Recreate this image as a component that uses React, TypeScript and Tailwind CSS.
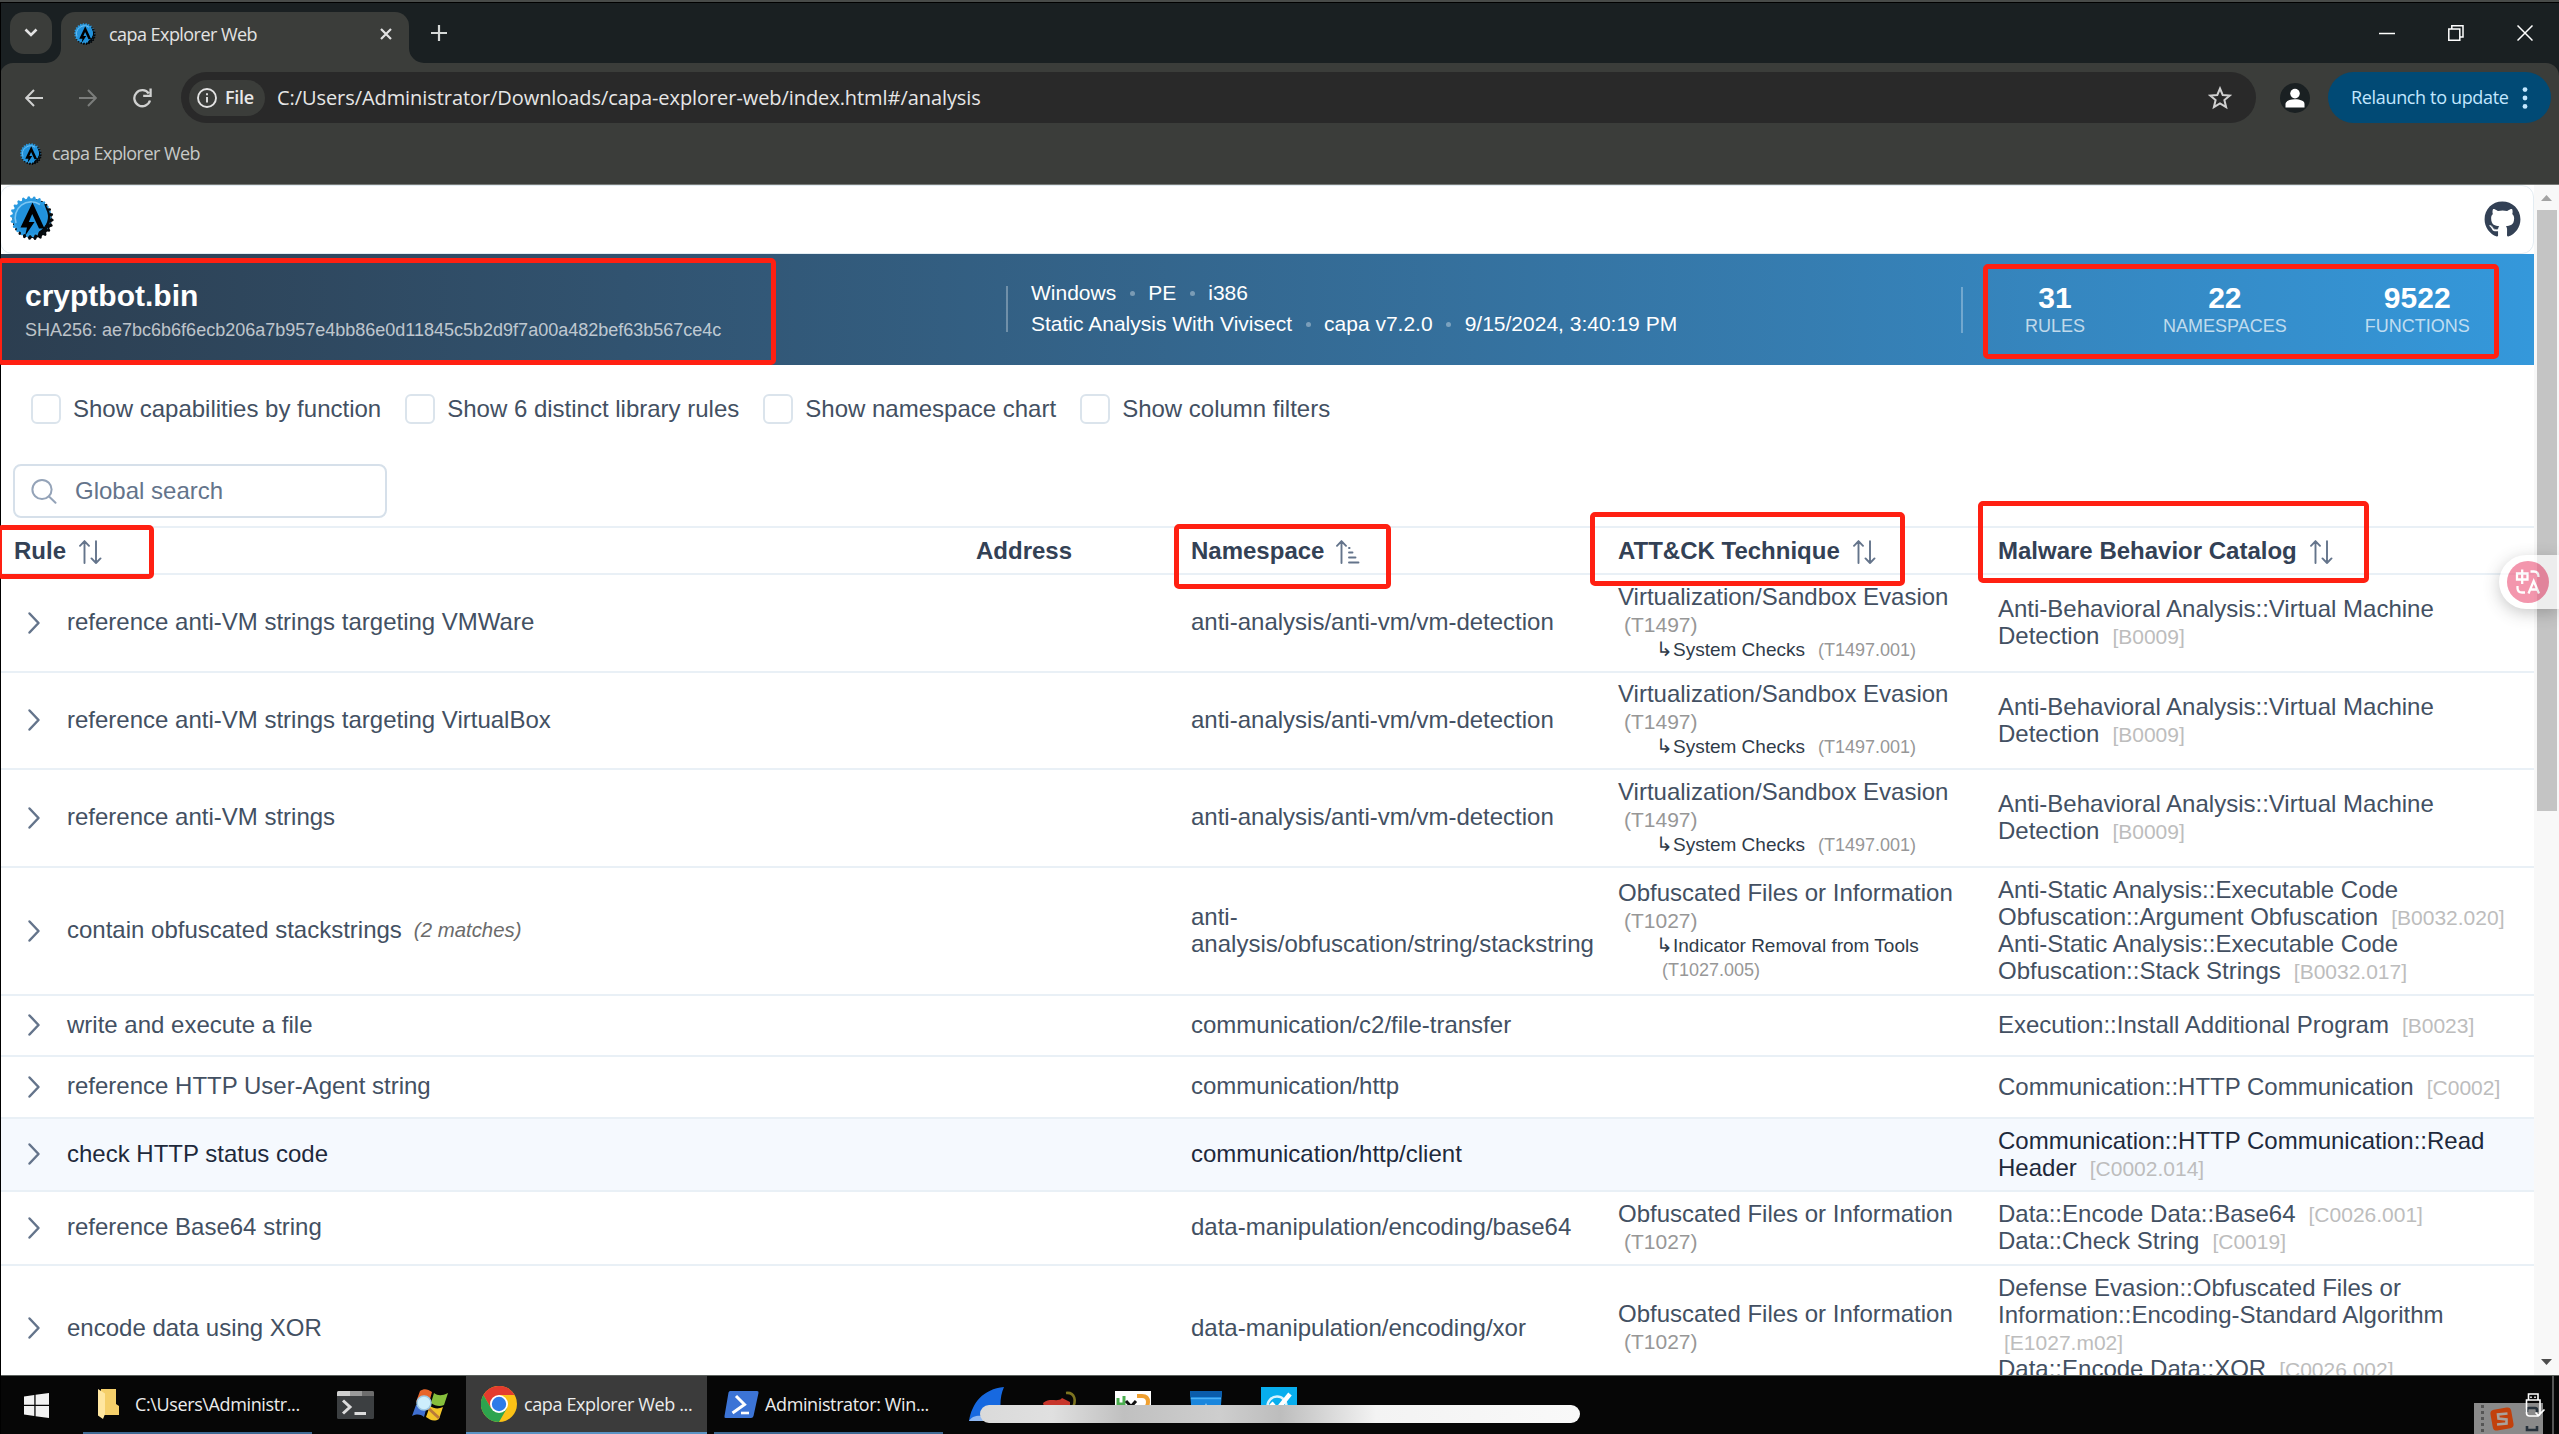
import type { ReactNode } from 'react';
import { clsx } from 'clsx';
import { FaGithub } from 'react-icons/fa';

type Technique = { name: string; id: string; sub?: { name: string; id: string; wrap?: boolean } };

type RuleRow = {
  rule: string;
  matches?: string;
  namespace: string[];
  attack?: Technique;
  mbc: { text?: string; id?: string }[];
  height: string;
  hovered?: boolean;
};

const vmDetection = {
  namespace: ['anti-analysis/anti-vm/vm-detection'],
  attack: {
    name: 'Virtualization/Sandbox Evasion',
    id: '(T1497)',
    sub: { name: 'System Checks', id: '(T1497.001)' },
  },
  mbc: [{ text: 'Anti-Behavioral Analysis::Virtual Machine' }, { text: 'Detection', id: '[B0009]' }],
};

const obfuscated = { name: 'Obfuscated Files or Information', id: '(T1027)' };

const rows: RuleRow[] = [
  { rule: 'reference anti-VM strings targeting VMWare', ...vmDetection, height: 'h-[98px]' },
  { rule: 'reference anti-VM strings targeting VirtualBox', ...vmDetection, height: 'h-[97px]' },
  { rule: 'reference anti-VM strings', ...vmDetection, height: 'h-[98px]' },
  {
    rule: 'contain obfuscated stackstrings',
    matches: '(2 matches)',
    namespace: ['anti-', 'analysis/obfuscation/string/stackstring'],
    attack: { ...obfuscated, sub: { name: 'Indicator Removal from Tools', id: '(T1027.005)', wrap: true } },
    mbc: [
      { text: 'Anti-Static Analysis::Executable Code' },
      { text: 'Obfuscation::Argument Obfuscation', id: '[B0032.020]' },
      { text: 'Anti-Static Analysis::Executable Code' },
      { text: 'Obfuscation::Stack Strings', id: '[B0032.017]' },
    ],
    height: 'h-[128px]',
  },
  {
    rule: 'write and execute a file',
    namespace: ['communication/c2/file-transfer'],
    mbc: [{ text: 'Execution::Install Additional Program', id: '[B0023]' }],
    height: 'h-[61px]',
  },
  {
    rule: 'reference HTTP User-Agent string',
    namespace: ['communication/http'],
    mbc: [{ text: 'Communication::HTTP Communication', id: '[C0002]' }],
    height: 'h-[62px]',
  },
  {
    rule: 'check HTTP status code',
    namespace: ['communication/http/client'],
    mbc: [{ text: 'Communication::HTTP Communication::Read' }, { text: 'Header', id: '[C0002.014]' }],
    height: 'h-[73px]',
    hovered: true,
  },
  {
    rule: 'reference Base64 string',
    namespace: ['data-manipulation/encoding/base64'],
    attack: obfuscated,
    mbc: [
      { text: 'Data::Encode Data::Base64', id: '[C0026.001]' },
      { text: 'Data::Check String', id: '[C0019]' },
    ],
    height: 'h-[74px]',
  },
  {
    rule: 'encode data using XOR',
    namespace: ['data-manipulation/encoding/xor'],
    attack: obfuscated,
    mbc: [
      { text: 'Defense Evasion::Obfuscated Files or' },
      { text: 'Information::Encoding-Standard Algorithm' },
      { id: '[E1027.m02]' },
      { text: 'Data::Encode Data::XOR', id: '[C0026.002]' },
    ],
    height: 'h-[127px]',
  },
];

const tableGrid = 'grid grid-cols-[962px_215px_427px_380px_1fr]';

const gearPath = (cx: number, cy: number, outer: number, inner: number, teeth: number) => {
  const points: string[] = [];
  for (let i = 0; i < teeth * 4; i++) {
    const r = i % 4 < 2 ? outer : inner;
    const a = (i / (teeth * 4)) * Math.PI * 2;
    points.push(`${(cx + r * Math.cos(a)).toFixed(2)} ${(cy + r * Math.sin(a)).toFixed(2)}`);
  }
  return `M${points.join('L')}Z`;
};

const CapaLogo = ({ className }: { className: string }) => (
  <svg viewBox="0 0 44 44" className={className}>
    <path d={gearPath(23, 23.4, 20.6, 18.6, 22)} fill="#05090c" />
    <path d={gearPath(20.8, 20.8, 20.6, 18.4, 22)} fill="#2a9ae0" />
    <path d="M34 7.5 A20 20 0 0 1 27 41 L29 35 A16 16 0 0 0 36 13Z" fill="#05090c" />
    <circle cx="20.8" cy="21.6" r="16.2" fill="#2192dc" />
    <path d="M6 27 A16 16 0 0 1 30 8.5" fill="none" stroke="#7cc6f3" strokeWidth="1.6" />
    <path d="M22.5 6.5 L34.5 32.5 L29 32.5 L22.2 18 L18.8 26 L24.5 26 L15 40 L17 31.5 L10.5 31.5Z" fill="#000" />
  </svg>
);

const SortIcon = () => (
  <svg viewBox="0 0 24 24" className="mt-0.5 size-6" fill="none" stroke="#64748b" strokeWidth="1.9" strokeLinecap="round" strokeLinejoin="round">
    <path d="M6.5 23V1.2M2 5.8L6.5 1.2L11 5.8M18 1.2V23M13.5 18.4L18 23L22.5 18.4" />
  </svg>
);

const SortAscIcon = () => (
  <svg viewBox="0 0 24 24" className="mt-0.5 size-6" fill="none" stroke="#64748b" strokeWidth="1.9" strokeLinecap="round" strokeLinejoin="round">
    <path d="M5.5 23V1.2M1 5.8L5.5 1.2L10 5.8M13 22.5H22.5M13 17.5H19.5M13 12.5H16.5M13 8H13.6" />
  </svg>
);

const ChevronRight = () => (
  <svg viewBox="0 0 24 24" className="mt-0.5 size-6 shrink-0" fill="none" stroke="#64748b" strokeWidth="2.5" strokeLinecap="round" strokeLinejoin="round">
    <path d="M7.5 2.5L16.5 12L7.5 21.5" />
  </svg>
);

const TitleBar = () => (
  <div className="flex h-[61px] shrink-0 items-start border-t border-black bg-[#1a2022]">
    <div className="ml-2.5 mt-[9px] flex size-[42px] items-center justify-center rounded-[14px] bg-[#3b3d3a]">
      <svg viewBox="0 0 14 10" className="h-2.5 w-3.5" fill="none" stroke="#e3e3e3" strokeWidth="2.6">
        <path d="M1.5 1.5L7 7L12.5 1.5" />
      </svg>
    </div>
    <svg viewBox="0 0 15 15" className="-ml-1.5 mt-[45px] size-[15px] shrink-0">
      <path d="M15 0V15H0A15 15 0 0 0 15 0Z" fill="#3b3d3a" />
    </svg>
    <div className="mt-[9px] flex h-[51px] w-[348px] items-center rounded-t-[14px] bg-[#3b3d3a] pb-2 pl-[13px] pr-[17px]">
      <CapaLogo className="size-[22px]" />
      <span className="ml-[13px] mt-0.5 text-[18px] tracking-[-0.55px] text-[#e3e3e3]">capa Explorer Web</span>
      <svg viewBox="0 0 12 12" className="ml-auto size-3" fill="none" stroke="#e3e3e3" strokeWidth="2.2">
        <path d="M1 1L11 11M11 1L1 11" />
      </svg>
    </div>
    <svg viewBox="0 0 15 15" className="mt-[45px] size-[15px] shrink-0">
      <path d="M0 0V15H15A15 15 0 0 1 0 0Z" fill="#3b3d3a" />
    </svg>
    <svg viewBox="0 0 16 16" className="ml-[7px] mt-[22px] size-4" stroke="#d5d8d7" strokeWidth="2.2">
      <path d="M8 0V16M0 8H16" />
    </svg>
    <div className="ml-auto mr-[26px] mt-[22px] flex items-center gap-[53px]">
      <svg viewBox="0 0 16 16" className="size-4" stroke="#fff" strokeWidth="1.5">
        <path d="M0 8.5H16" />
      </svg>
      <svg viewBox="0 0 16 16" className="size-4" fill="none" stroke="#fff" strokeWidth="1.5">
        <path d="M0.8 4H11.8V15.2H0.8ZM3.8 4V0.8H15V12H11.8" />
      </svg>
      <svg viewBox="0 0 16 16" className="size-4" stroke="#fff" strokeWidth="1.5">
        <path d="M0.5 0.5L15.5 15.5M15.5 0.5L0.5 15.5" />
      </svg>
    </div>
  </div>
);

const Toolbar = () => (
  <div className="bg-[#1a2022]">
    <div className="flex h-[122px] flex-col rounded-t-[13px] border-b border-[#777a77] bg-[#3b3d3a]">
      <div className="flex items-center pr-2 pt-[9px]">
        <svg viewBox="0 0 18 18" className="ml-[25px] size-[18px]" fill="none" stroke="#d0d1d0" strokeWidth="2">
          <path d="M18 9H1.5M9 1L1.2 9L9 17" />
        </svg>
        <svg viewBox="0 0 18 18" className="ml-9 size-[18px]" fill="none" stroke="#7b7d7b" strokeWidth="2">
          <path d="M0 9H16.5M9 1L16.8 9L9 17" />
        </svg>
        <svg viewBox="0 0 20 20" className="ml-[35px] size-5" fill="none" stroke="#d0d1d0" strokeWidth="2.3">
          <path d="M16.8 5.5A8 8 0 1 0 18 12.5M18.6 0.5V7.8H11.2" />
        </svg>
        <div className="ml-[29px] flex h-[51px] w-[2076px] items-center rounded-full bg-[#292929] pl-2 pr-6">
          <div className="flex h-9 w-[76px] items-center rounded-full bg-[#3b3d3a] pl-2">
            <svg viewBox="0 0 20 20" className="size-5" fill="none" stroke="#e3e3e3" strokeWidth="1.9">
              <circle cx="10" cy="10" r="9" />
              <path d="M10 9V14.5M10 5.2V7.2" />
            </svg>
            <span className="ml-2 text-[18px] font-semibold tracking-[-0.3px] text-[#e8e8e8]">File</span>
          </div>
          <span className="ml-3 text-[20px] tracking-[-0.07px] text-[#e6e6e6]">
            C:/Users/Administrator/Downloads/capa-explorer-web/index.html#/analysis
          </span>
          <svg viewBox="0 0 24 24" className="ml-auto size-6" fill="none" stroke="#d0d0d0" strokeWidth="2">
            <path d="M12 2.5L14.7 9L21.8 9.5L16.4 14.1L18.1 21.2L12 17.4L5.9 21.2L7.6 14.1L2.2 9.5L9.3 9Z" />
          </svg>
        </div>
        <div className="ml-6 flex size-[30px] items-center justify-center rounded-full bg-[#1a2022]">
          <svg viewBox="0 0 20 20" className="size-5" fill="#fff">
            <circle cx="10" cy="5.6" r="4.8" />
            <path d="M0.5 19.5V16C0.5 12.8 5 11.3 10 11.3S19.5 12.8 19.5 16V19.5Z" />
          </svg>
        </div>
        <div className="ml-[18px] flex h-[51px] w-[223px] items-center rounded-full bg-[#014a75] pl-[23px]">
          <span className="whitespace-nowrap text-[18px] tracking-[-0.35px] text-[#c2e7ff]">Relaunch to update</span>
          <svg viewBox="0 0 6 22" className="ml-auto mr-[23px] h-[22px] w-1.5" fill="#c2e7ff">
            <circle cx="3" cy="2.6" r="2.4" />
            <circle cx="3" cy="11" r="2.4" />
            <circle cx="3" cy="19.4" r="2.4" />
          </svg>
        </div>
      </div>
      <div className="flex items-center pl-5 pt-[17px]">
        <CapaLogo className="size-[22px]" />
        <span className="ml-2.5 text-[18px] tracking-[-0.55px] text-[#c7c9c7]">capa Explorer Web</span>
      </div>
    </div>
  </div>
);

const Dot = () => <span className="mt-0.5 size-[5px] rounded-full bg-white/35" />;

const stats = [
  { value: '31', label: 'RULES' },
  { value: '22', label: 'NAMESPACES' },
  { value: '9522', label: 'FUNCTIONS' },
];

const Banner = () => (
  <div className="flex h-[111px] shrink-0 bg-linear-to-r from-[#2c3e50] to-[#3498db] pt-8 text-white">
    <div className="w-[1006px] pl-[25px]">
      <div className="-mt-2 text-[30px] font-bold leading-9">cryptbot.bin</div>
      <div className="mt-1.5 text-[18px] leading-5 text-white/70">
        SHA256: ae7bc6b6f6ecb206a7b957e4bb86e0d11845c5b2d9f7a00a482bef63b567ce4c
      </div>
    </div>
    <div className="h-[46px] w-[955px] border-l-2 border-white/30 pl-[23px] text-[21px]">
      <div className="-mt-1.5 flex h-[25px] items-center gap-[13.5px]">
        <span>Windows</span>
        <Dot />
        <span>PE</span>
        <Dot />
        <span>i386</span>
      </div>
      <div className="mt-1.5 flex h-[25px] items-center gap-[13.5px]">
        <span>Static Analysis With Vivisect</span>
        <Dot />
        <span>capa v7.2.0</span>
        <Dot />
        <span>9/15/2024, 3:40:19 PM</span>
      </div>
    </div>
    <div className="mt-px flex h-[46px] gap-[78px] border-l-2 border-white/30 pl-[62px]">
      {stats.map((s) => (
        <div key={s.label} className="-mt-1.5 text-center">
          <div className="text-[30px] font-bold leading-[34px]">{s.value}</div>
          <div className="mt-px text-[18px] leading-5 text-white/70">{s.label}</div>
        </div>
      ))}
    </div>
  </div>
);

const options = [
  'Show capabilities by function',
  'Show 6 distinct library rules',
  'Show namespace chart',
  'Show column filters',
];

const HeaderCell = ({ label, icon }: { label: string; icon?: ReactNode }) => (
  <div className="flex items-center gap-3 pl-[14px] font-bold text-[#334155]">
    {label}
    {icon}
  </div>
);

const AttackCell = ({ attack }: { attack?: Technique }) => (
  <div className="pl-[14px]">
    {attack && (
      <>
        <div className="-mt-0.5">{attack.name}</div>
        <div className="mt-px pl-1.5 text-[21px] text-[#979797]">{attack.id}</div>
        {attack.sub && (
          <div className="pl-[38px] text-[19px] leading-6 text-[#2f3b49]">
            <span className="inline-block w-[17px] text-[20px] leading-5">↳</span>
            {attack.sub.name}
            <span className={clsx('ml-1.5 text-[18px] text-[#979797]', attack.sub.wrap ? 'block' : 'pl-[7px]')}>
              {attack.sub.id}
            </span>
          </div>
        )}
      </>
    )}
  </div>
);

const TableRow = ({ row }: { row: RuleRow }) => (
  <div
    className={clsx(
      tableGrid,
      row.height,
      'shrink-0 items-center whitespace-nowrap border-b-2 border-[#e9f0f6]',
      row.hovered ? 'bg-[#f5f9fe] text-[#1e293b]' : 'text-[#435062]',
    )}
  >
    <div className="-mt-[3px] flex items-center pl-[22px]">
      <ChevronRight />
      <span className="ml-[21px]">{row.rule}</span>
      {row.matches && <span className="ml-3 mt-0.5 text-[20.4px] italic text-[#6b6b6b]">{row.matches}</span>}
    </div>
    <div />
    <div className="-mt-[3px] pl-[14px]">
      {row.namespace.map((line) => (
        <div key={line}>{line}</div>
      ))}
    </div>
    <AttackCell attack={row.attack} />
    <div className="-mt-0.5 pl-[14px]">
      {row.mbc.map((line, i) => (
        <div key={i} className="h-[27px]">
          {line.text}
          {line.id && (
            <span className={clsx('text-[21px] text-[#bdbdbd]', line.text ? 'ml-[13px]' : 'ml-1.5')}>{line.id}</span>
          )}
        </div>
      ))}
    </div>
  </div>
);

const Page = () => (
  <div className="flex h-[1190px] w-[2534px] flex-col overflow-hidden bg-white font-['Liberation_Sans',Arial,sans-serif] text-[24px] leading-[27px]">
    <div className="flex h-[69px] shrink-0 items-center justify-between rounded-xl border border-[#e3ecf2] pl-[9px] pr-3">
      <CapaLogo className="mb-1 size-11" />
      <FaGithub className="size-[37px] text-[#334155]" />
    </div>
    <Banner />
    <div className="mt-[29px] flex shrink-0 items-center gap-6 pl-[31px] text-[#435062]">
      {options.map((label) => (
        <label key={label} className="flex items-center gap-3">
          <span className="size-[30px] rounded-md border-2 border-[#dbe4ec] bg-white" />
          <span className="-mt-0.5">{label}</span>
        </label>
      ))}
    </div>
    <div className="ml-[13px] mt-10 flex h-[54px] w-[374px] shrink-0 items-center rounded-lg border-2 border-[#d6e0ea] pl-4 text-[#64748b]">
      <svg viewBox="0 0 26 26" className="size-[26px]" fill="none" stroke="#94a3b8" strokeWidth="2" strokeLinecap="round">
        <circle cx="11" cy="11.5" r="9.6" />
        <path d="M18 18.5L24.5 24.8" />
      </svg>
      <span className="-mt-0.5 ml-[18px]">Global search</span>
    </div>
    <div className={clsx(tableGrid, 'mt-2 h-[49px] shrink-0 items-center border-y-2 border-[#e9f0f6]')}>
      <HeaderCell label="Rule" icon={<SortIcon />} />
      <HeaderCell label="Address" />
      <HeaderCell label="Namespace" icon={<SortAscIcon />} />
      <HeaderCell label="ATT&CK Technique" icon={<SortIcon />} />
      <HeaderCell label="Malware Behavior Catalog" icon={<SortIcon />} />
    </div>
    {rows.map((row) => (
      <TableRow key={row.rule} row={row} />
    ))}
  </div>
);

const Scrollbar = () => (
  <div className="flex w-[25px] flex-col items-center justify-between bg-[#f8f8f8]">
    <div className="flex flex-col items-center">
      <svg viewBox="0 0 11 6" className="mt-2.5 h-1.5 w-[11px]">
        <path d="M0 6L5.5 0L11 6Z" fill="#a3a3a3" />
      </svg>
      <div className="mt-[9px] h-[601px] w-5 bg-[#c4c4c4]" />
    </div>
    <svg viewBox="0 0 11 6" className="mb-2.5 h-1.5 w-[11px]">
      <path d="M0 0L5.5 6L11 0Z" fill="#4d4d4d" />
    </svg>
  </div>
);

const taskText = 'whitespace-nowrap text-[18px] tracking-[-0.38px] text-[#ececec]';

const Taskbar = () => (
  <div className="flex h-[59px] shrink-0 items-stretch border-t border-[#5c625e] bg-[#060606]">
    <div className="flex w-[83px] items-center pl-6">
      <svg viewBox="0 0 25 25" className="size-[25px]" fill="#f2f2f2">
        <path d="M0 3.5L10.3 2V11.8H0ZM11.6 1.8L25 0V11.8H11.6ZM0 13.1H10.3V23L0 21.6ZM11.6 13.1H25V25L11.6 23.2Z" />
      </svg>
    </div>
    <div className="flex w-[229px] items-center border-b-2 border-[#3f6a93] pl-3.5">
      <svg viewBox="0 0 22 30" className="h-[30px] w-[22px]">
        <path d="M4 0H19V15L22 17V26H4Z" fill="#f5cf6a" />
        <path d="M1 0L8 4.5V25L6 30L1 26.5Z" fill="#ffe6a0" />
      </svg>
      <span className={clsx(taskText, 'ml-4')}>C:\Users\Administr...</span>
    </div>
    <div className="flex w-[154px] items-center justify-between pl-[25px] pr-[18px]">
      <svg viewBox="0 0 37 28" className="h-7 w-[37px]">
        <rect width="37" height="28" rx="1.5" fill="#3c3f41" />
        <path d="M0 5V1.5Q0 0 1.5 0H13V5Z" fill="#cfcfcf" />
        <path d="M13 0H25V5H13Z" fill="#9a9a9a" />
        <path d="M25 0H35.5Q37 0 37 1.5V5H25Z" fill="#6d6d6d" />
        <path d="M6 9.5L13 16L6 22.5" fill="none" stroke="#dcdcdc" strokeWidth="3" />
        <path d="M17.5 22.5H29" stroke="#dcdcdc" strokeWidth="3" />
      </svg>
      <svg viewBox="0 0 36 34" className="h-[34px] w-9">
        <path d="M8 3C12 0 16 1 20 4L17 15C13 12 9 12 4 14Z" fill="#e8652b" />
        <path d="M22 5C26 8 30 8 36 5L32 17C28 19 23 18 19 15Z" fill="#86bf3c" />
        <path d="M4 17C8 15 12 16 15 18L12 29C8 26 5 26 0 28Z" fill="#3f6fd0" />
        <path d="M18 18C22 21 27 21 31 19L27 31C22 34 18 32 14 29Z" fill="#f3c529" />
        <path d="M15 19L27 30" stroke="#b97a3a" strokeWidth="3" />
        <circle cx="12" cy="15" r="7" fill="#cdeefc" stroke="#9cc9e6" strokeWidth="1.5" />
      </svg>
    </div>
    <div className="flex w-[241px] items-center border-b-2 border-[#5a93c4] bg-[#3b3b3b] pl-[15px]">
      <svg viewBox="0 0 36 36" className="size-9">
        <circle cx="18" cy="18" r="18" fill="#fbc116" />
        <path d="M2.4 9A18 18 0 0 1 33.6 9H18L10.2 22.5Z" fill="#e33b2e" />
        <path d="M2.4 9A18 18 0 0 0 18 36L25.8 22.5H10.2Z" fill="#2da44e" />
        <circle cx="18" cy="18" r="9" fill="#fff" />
        <circle cx="18" cy="18" r="7.2" fill="#2d7be8" />
      </svg>
      <span className={clsx(taskText, 'ml-[7px]')}>capa Explorer Web ...</span>
    </div>
    <div className="ml-[7px] flex w-[229px] items-center border-b-2 border-[#3f6a93] pl-2.5">
      <svg viewBox="0 0 35 27" className="h-[27px] w-[35px]">
        <path d="M6 0H33Q35 0 34.5 2L29.5 25Q29 27 27 27H1.5Q0 27 0.5 25L4.5 1.5Q5 0 6 0Z" fill="#3c74d6" />
        <path d="M12 5L20.5 13.5L8.5 22" fill="none" stroke="#fff" strokeWidth="3" />
        <path d="M17 22H25" stroke="#fff" strokeWidth="2.6" />
      </svg>
      <span className={clsx(taskText, 'ml-1.5')}>Administrator: Win...</span>
    </div>
    <div className="flex items-center gap-[37px] pl-[26px]">
      <svg viewBox="0 0 36 36" className="size-9">
        <path d="M0 34C3 16 14 2 35 0C30 11 31 24 34 34Z" fill="#1769e0" />
        <path d="M0 34C4 27 14 27 34 34Z" fill="#8fb8f2" />
      </svg>
      <svg viewBox="0 0 36 36" className="size-9">
        <path d="M1 16C8 10 16 16 20 11L28 15V30H5Z" fill="#c7352b" />
        <path d="M24 6C33 5 35 14 30 22" fill="none" stroke="#7d7420" strokeWidth="2.6" />
      </svg>
      <svg viewBox="0 0 36 36" className="size-9">
        <rect y="4" width="36" height="28" fill="#fff" />
        <path d="M3 11V24M3 17H9M9 9V22" stroke="#4caf50" strokeWidth="3" />
        <path d="M11 14L21 25M21 14L11 25" stroke="#111" strokeWidth="3" />
        <path d="M22 9H27Q33 9 33 15T27 22" fill="none" stroke="#f0a030" strokeWidth="4" />
      </svg>
      <svg viewBox="0 0 36 36" className="size-9">
        <path d="M2 4H34L32 32H4Z" fill="#1a86dd" />
        <path d="M2 4H34L33.5 10H2.5Z" fill="#0a5cab" />
        <path d="M2.8 11.5H33" stroke="#4cb0f5" strokeWidth="1.4" />
        <path d="M18 16L22 24H14Z" fill="#8cc8f6" />
      </svg>
      <svg viewBox="0 0 36 36" className="size-9">
        <rect width="36" height="36" fill="#08aeee" />
        <circle cx="16" cy="19" r="9.5" fill="none" stroke="#d7f2fd" strokeWidth="2.5" />
        <path d="M10 16L16 23L29 7" fill="none" stroke="#fff" strokeWidth="4.5" />
      </svg>
    </div>
    <div className="ml-auto flex w-[85px] items-end">
      <div className="flex h-[31px] w-[69px] items-center bg-[#8a8a8a] pl-[7px]">
        <svg viewBox="0 0 3 27" className="h-[27px] w-[3px]" fill="#555">
          <path d="M0 0H3V3H0ZM0 6H3V9H0ZM0 12H3V15H0ZM0 18H3V21H0ZM0 24H3V27H0Z" />
        </svg>
        <svg viewBox="0 0 24 24" className="ml-1.5 size-6">
          <rect x="1.5" y="1.5" width="21" height="21" rx="4" fill="#c2410c" transform="rotate(-10 12 12)" />
          <path d="M17.5 6.5L8 7.5L8.5 11.5L16.5 12.5L16.5 16.5L7 17.5" fill="none" stroke="#a9a29c" strokeWidth="2.6" />
        </svg>
        <svg viewBox="0 0 14 26" className="ml-[11px] h-[26px] w-3.5" fill="none" stroke="#27323c" strokeWidth="2.6">
          <path d="M2 6V4Q2 2 4 2H10Q12 2 12 4V6M2 20V24H12V20" />
        </svg>
      </div>
      <div className="ml-[9px] h-[58px] w-0.5 bg-[#555]" />
    </div>
  </div>
);

/* Red frames drawn over the regions being pointed out */
const callouts = [
  'left-[-3px] top-[258px] h-[107px] w-[779px]',
  'left-[1983px] top-[264px] h-[95px] w-[516px]',
  'left-[-3px] top-[525px] h-[54px] w-[157px]',
  'left-[1174px] top-[524px] h-[65px] w-[217px]',
  'left-[1590px] top-[512px] h-[74px] w-[315px]',
  'left-[1978px] top-[501px] h-[82px] w-[391px]',
];

const App = () => (
  <div className="relative flex h-[1434px] w-[2559px] flex-col overflow-hidden bg-[#1a2022] font-['Open_Sans','Noto_Sans',sans-serif]">
    <div className="h-0.5 shrink-0 bg-[#484b49]" />
    <TitleBar />
    <Toolbar />
    <div className="flex h-[1190px] shrink-0 bg-white">
      <Page />
      <Scrollbar />
    </div>
    <Taskbar />

    {/* Window edge */}
    <div className="absolute bottom-0 left-0 top-0.5 w-px bg-black" />

    {callouts.map((c) => (
      <div key={c} className={clsx('absolute rounded-[5px] border-[5px] border-[#ff2012]', c)} />
    ))}

    {/* Translate button docked to the right edge */}
    <div className="absolute left-[2499px] top-[555px] flex h-[54px] w-[60px] items-center rounded-l-full bg-white pl-2 opacity-70 shadow-[0_4px_16px_rgba(0,0,0,0.3)]">
      <div className="flex size-[42px] items-center justify-center rounded-full bg-[#ee6a8b]">
        <svg viewBox="0 0 26 26" className="size-[26px]" fill="none" stroke="#fff" strokeWidth="2.3">
          <path d="M2 4.5H12.5V10.5H2ZM7.2 0.5V15M15.5 2.5H19Q23.5 2.5 23.5 8M2.5 17V19Q2.5 23.5 7 23.5H10" />
          <path d="M13.5 24.5L18.7 12L24 24.5M15.5 20.5H22" />
        </svg>
      </div>
    </div>

    {/* Home indicator */}
    <div className="absolute left-[980px] top-[1405px] h-[18px] w-[600px] rounded-full bg-[linear-gradient(90deg,#dadada_0%,#e0e0e0_12%,#c0c0c0_24%,#cecece_40%,#bdbdbd_50%,#f3f3f3_66%,#f9f9f9_100%)]" />

    <svg viewBox="0 0 22 26" className="absolute left-[2524px] top-[1393px] h-[26px] w-[22px]" fill="none" stroke="#fff" strokeWidth="1.6">
      <path d="M4.5 7V1H14V7M2.5 7H16V20Q16 23 13 23H5.5Q2.5 23 2.5 20ZM7 3.5V5M11 3.5V5M11.5 19.5L14.5 22.5L20.5 16.5" />
    </svg>
  </div>
);

export default App;
